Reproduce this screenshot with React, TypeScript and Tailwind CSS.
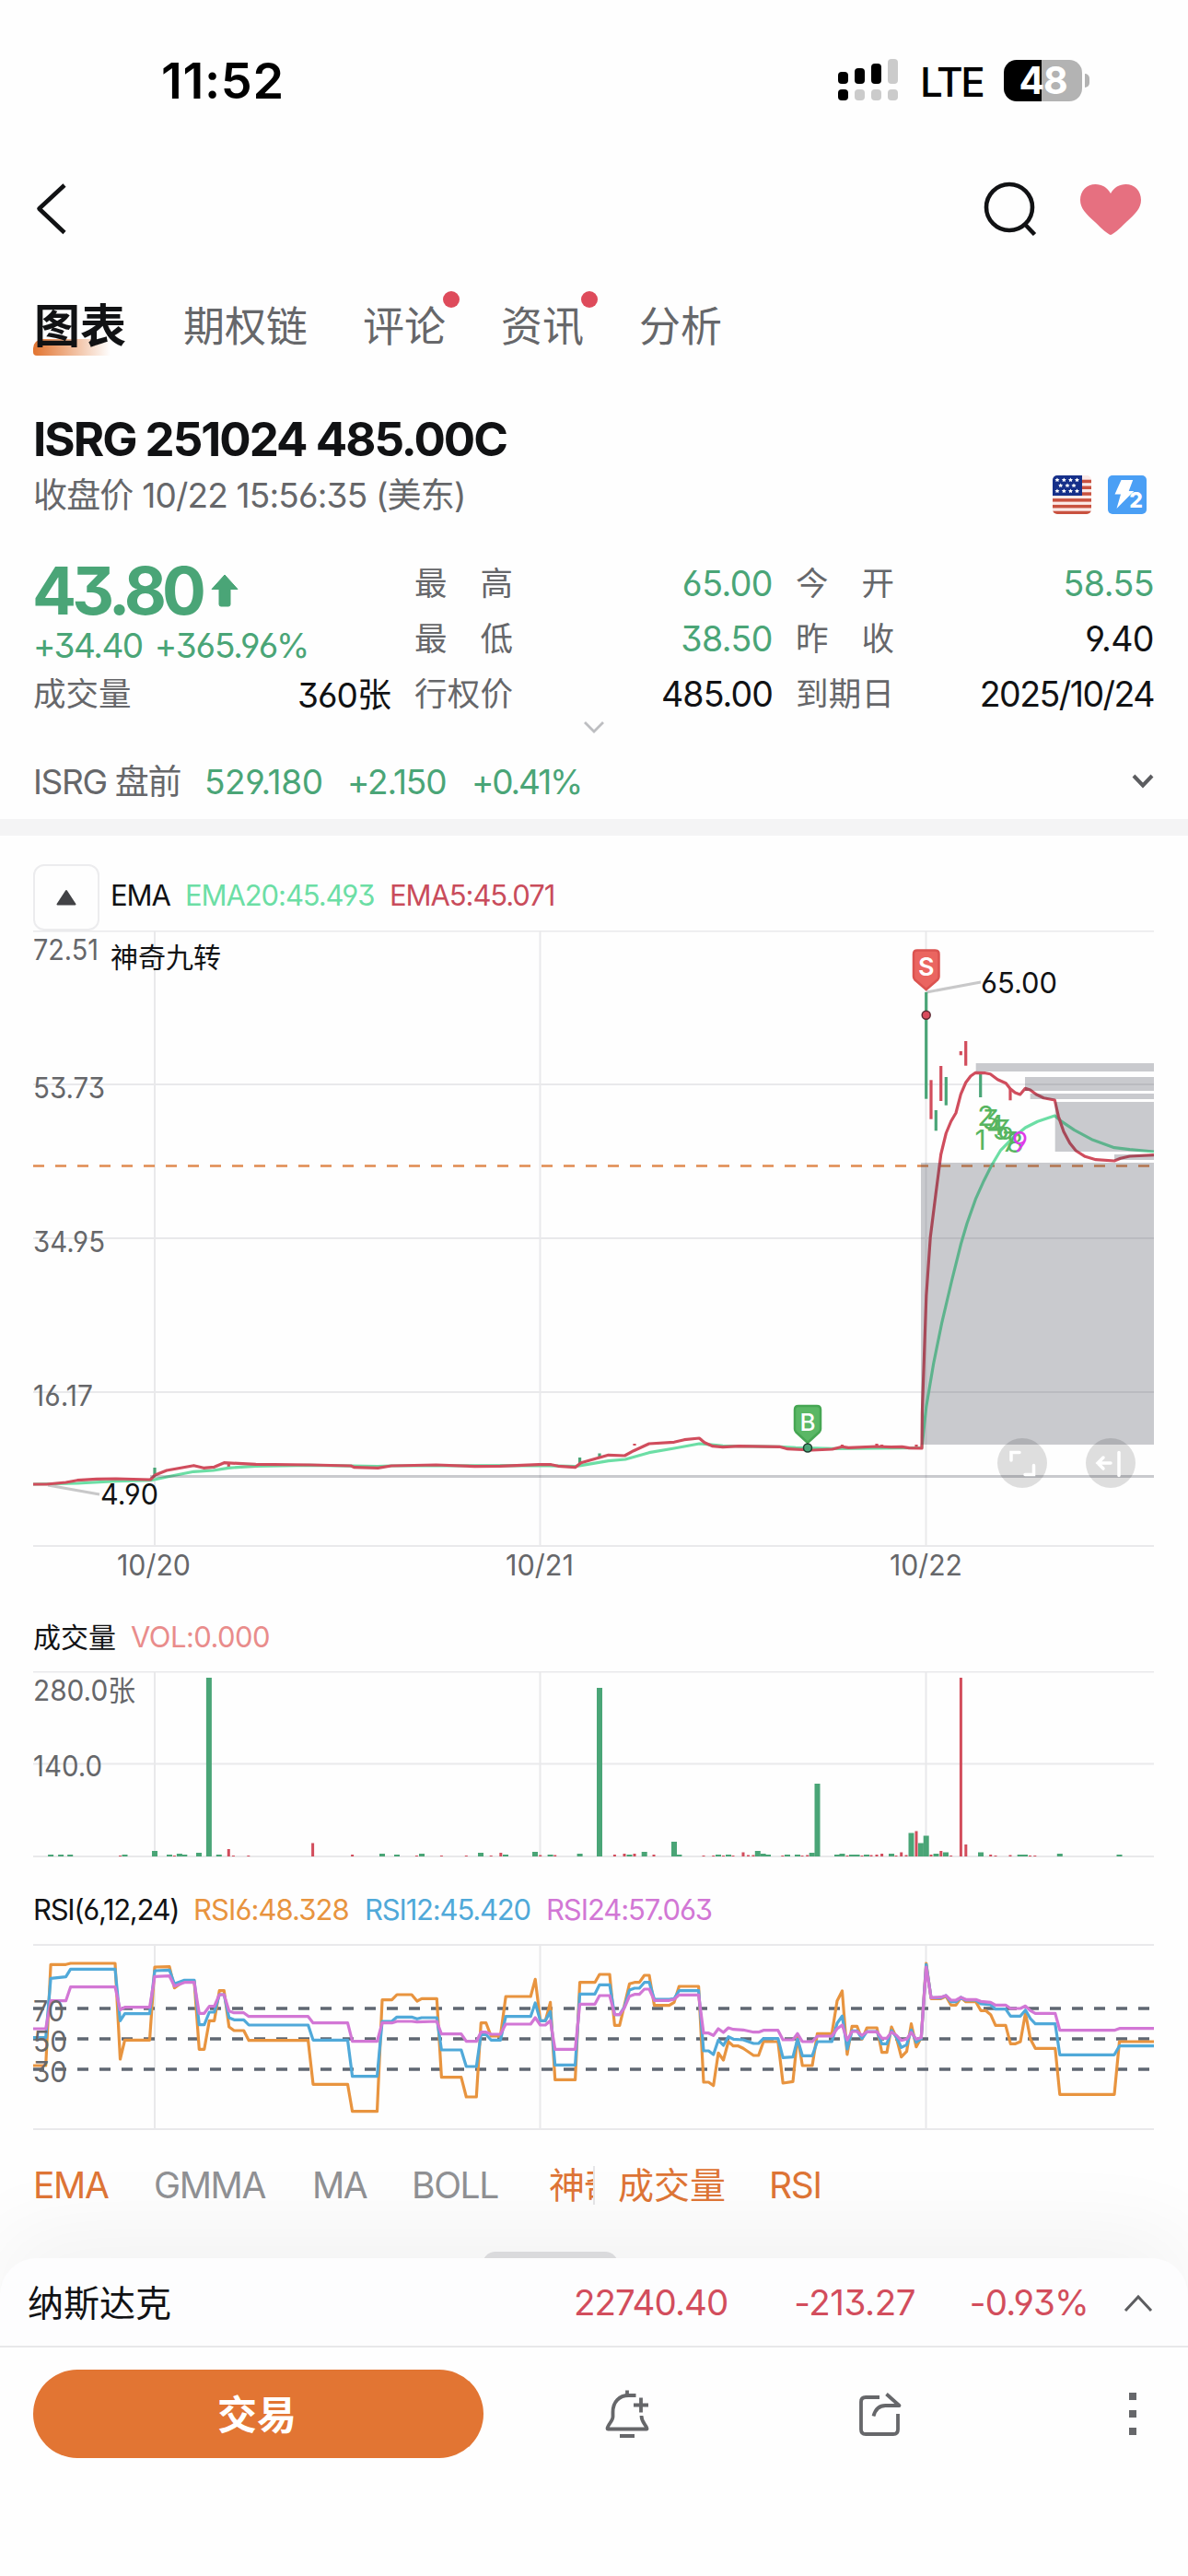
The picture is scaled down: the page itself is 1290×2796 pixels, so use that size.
import React from 'react';

const UP = '#4aa577';
const DOWN = '#d24d5c';
const GRID = '#e9e9eb';

const STATS = [
  [
    { label: '最高', value: '65.00', tone: 'text-[#4aa577] tracking-[-0.014em]' },
    { label: '最低', value: '38.50', tone: 'text-[#4aa577] tracking-[-0.014em]' },
    { label: '行权价', value: '485.00', tone: 'text-[#111214] tracking-[-0.024em]' },
  ],
  [
    { label: '今开', value: '58.55', tone: 'text-[#4aa577] tracking-[-0.014em]' },
    { label: '昨收', value: '9.40', tone: 'text-[#111214] tracking-[-0.014em]' },
    { label: '到期日', value: '2025/10/24', tone: 'text-[#111214] tracking-[-0.041em]' },
  ],
];

const EMA5 =
  '36,1611 50.5,1611 71.5,1609 84,1606.7 105,1605.3 126,1605 163.3,1606 168.4,1601 181,1596 210.4,1590.7 221,1593.3 232.7,1592.3 243.3,1587.7 277.8,1589.3 336.7,1590 380.9,1591 385,1592.7 410.4,1593.3 425,1591 473.5,1590 515.6,1591.7 543,1591.3 585,1589.7 598.5,1589.7 606,1591.3 624.6,1592.7 630.8,1587.7 648.4,1582.7 660.7,1579.3 678.3,1580 688,1574.7 704.8,1567 732,1565.3 743,1562.7 759.3,1561 765,1565.7 773.9,1569.7 784.9,1570.7 802.5,1569.7 846.5,1570.3 855.3,1572.7 881.7,1574 903.7,1573 914.7,1570.3 921.3,1571.3 952,1570 967.5,1570.7 979.4,1570.3 987.3,1571.7 1001,1572 1001.4,1533 1005.8,1406.7 1010.2,1343.3 1016,1297 1021.7,1253 1027.3,1230 1032.7,1217 1038,1208 1043.3,1187.7 1048.7,1175 1054,1168 1059.3,1164.3 1070,1164.7 1075.3,1165.7 1083.3,1171.7 1092.3,1175.7 1097,1181.7 1102.3,1186 1107.7,1188 1113.3,1181.3 1118.7,1183 1125,1187.7 1133.3,1191.7 1145.3,1194 1149.3,1211.7 1155,1228.3 1161.7,1240.7 1168.3,1249 1178.3,1255.3 1190,1258.7 1210,1260 1216.7,1257.3 1226.7,1255 1253,1253.7';

const EMA20 =
  '36,1611 84,1610 126,1607.7 164,1606.7 185,1602.3 210.4,1597.3 231.5,1596 248,1593.3 277.8,1591.3 336.7,1590.3 410,1591.7 425,1591 585,1590.7 624.6,1591.7 630.8,1590.7 660.7,1585.7 679,1584 704.8,1576.7 732,1572 759.3,1567 765,1567.3 784.9,1569.3 846.5,1570.3 864,1571.3 903.7,1572.3 1001,1571.3 1005.8,1526.7 1013.7,1480 1022.5,1436.7 1033.5,1390 1043.5,1350 1050,1328 1059.3,1301.7 1068.3,1281.7 1076.7,1265 1086.7,1248.3 1100,1235 1113.3,1224 1126.7,1217.3 1145.3,1211 1153.3,1217.7 1166.7,1226.7 1186.7,1237.3 1210,1245.7 1226.7,1247.7 1253,1250';

// x, top, bottom, colour
const CANDLES: [number, number, number, string][] = [
  [168, 1593, 1602, UP],
  [248.3, 1588, 1592, DOWN],
  [629.6, 1582, 1590, UP],
  [651, 1577.5, 1583, UP],
  [689, 1567, 1569, DOWN],
  [914.5, 1568, 1571, DOWN],
  [952, 1567, 1571, DOWN],
  [957.6, 1568, 1571, DOWN],
  [995, 1568, 1571, DOWN],
  [1005.7, 1077, 1192.7, UP],
  [1011, 1172.3, 1214.7, DOWN],
  [1016.3, 1205, 1227.3, UP],
  [1021.7, 1157, 1195, DOWN],
  [1027.3, 1169, 1199.7, UP],
  [1043.3, 1141, 1145.3, DOWN],
  [1048.7, 1130, 1156.7, DOWN],
  [1064.7, 1165, 1191, UP],
  [1097, 1181.7, 1194.3, DOWN],
];

// x, y, height of the unfilled price gaps
const GAPS = [
  [1059.7, 1154, 9],
  [1113, 1169, 15],
  [1118.7, 1187, 6],
  [1145.7, 1196, 54],
  [1210, 1253, 6],
  [1000, 1262, 306],
  [163, 1601, 3],
];

const NINE = [
  [1064.7, 1248],
  [1070.5, 1222],
  [1075.8, 1226],
  [1081, 1232],
  [1086.5, 1236.5],
  [1092, 1237],
  [1097, 1250],
  [1102, 1251],
  [1107.5, 1249.5],
];

const VOL_UP = [
  [55.1, 2], [66.1, 2], [76.2, 2], [135.5, 2], [168, 6], [184, 2], [194.9, 3], [200.3, 2], [216, 4],
  [226.9, 194], [237.8, 2], [415, 3], [431, 2], [458, 3], [522, 4], [549, 2], [581, 5], [597.6, 2],
  [629.6, 3], [651, 183], [683.5, 2], [699.7, 5], [732, 16], [737.4, 2], [780, 2], [791, 2], [822.8, 6],
  [828.6, 3], [834, 2], [855, 2], [866, 2], [881.7, 4], [887.5, 79], [909, 2], [914.5, 3], [925, 2],
  [930.6, 2], [941, 2], [968, 3], [989.5, 25.5], [999.9, 14.5], [1005.7, 22.5], [1016.5, 3], [1027, 4.5],
  [1065, 4.5], [1107.7, 2], [1113, 2], [1150.8, 3], [1215.5, 2],
];

const VOL_DOWN = [
  [130.5, 1], [189.4, 1], [248.3, 8], [253.4, 1], [269.8, 1], [339.6, 14.5], [382.6, 2], [452.4, 1],
  [479.4, 1], [506.3, 1], [533.2, 1], [543.8, 4], [586.7, 1.5], [602.7, 1.5], [667.4, 2], [678, 3], [689, 3],
  [710, 2], [764, 1], [774.7, 1], [785.5, 1], [796, 1], [807, 4.5], [812.5, 1.5], [818, 1.5], [849.8, 1],
  [871, 1], [876.7, 1.5], [920, 1], [936, 1], [946, 1.5], [952, 2], [957.6, 3], [973, 1], [978.7, 4.5],
  [984, 1.5], [995, 27.5], [1011, 2], [1021.8, 6], [1032.6, 1], [1043.4, 194], [1048.8, 13], [1075.7, 2],
  [1081, 1], [1097, 1.5], [1118.5, 1], [1123.8, 1],
];

const RSI6 =
  '36,2242 49.7,2242 55.1,2132.3 71.5,2132.3 76.6,2131 125,2131 130.5,2235 135.5,2214.3 162.5,2214.3 168,2135 184,2134.7 189.4,2157.7 200.3,2150 210.9,2150 216.3,2224.3 221.8,2224.3 227.3,2193.3 232.7,2193.3 238.2,2160.7 243.3,2160.7 248.7,2200 254.2,2204 264.7,2204 270.2,2214.7 334.6,2214.7 340,2262.3 377.5,2262.3 382.6,2291.7 409.5,2291.7 415,2170.7 425.5,2170.7 431,2165 447,2165 452.9,2172 457.9,2169.3 474.3,2169.3 479.4,2254.7 500.8,2254.7 506.3,2276 517.3,2276 522.3,2195.7 527.8,2195.7 533.2,2210 543.4,2210 549.2,2167 576.2,2167 581.2,2148.3 586.7,2193.3 592.2,2193.3 597.6,2173.3 602.7,2257.3 624.6,2257.3 629.6,2151.7 646,2151.7 651,2143 662,2143 667.4,2198.3 672.8,2198.3 678,2176.7 683.5,2153.3 689,2151.7 694.3,2151.7 699.7,2144 705,2144 710.5,2176.7 726.7,2176.7 732,2173.3 737.4,2156 758.6,2156 764,2260 769.4,2260 774.7,2263.7 780,2228.3 785.5,2236 790.9,2216 796.3,2220.7 801.7,2220.7 807,2223.3 818.3,2231 823.7,2231 829,2216 844.8,2216 850.2,2261 861,2259.3 866,2210 871.3,2242 882,2242 887.5,2207.3 903.3,2207.3 909,2171.7 914.5,2161 919.9,2230 925.2,2199.3 930.6,2199.3 936,2213.3 941.4,2201 952.2,2201 957.6,2227.7 963,2227.7 968,2200 973.3,2211.7 978.7,2232.7 984.5,2226.7 989.5,2196.7 994.9,2221.7 1000.3,2211.7 1005.7,2131 1011,2169.3 1021.8,2169.3 1027.2,2166.7 1032.6,2176.3 1038,2176.3 1043.4,2168.3 1048.8,2172.7 1059.6,2172.7 1065,2182.3 1070.3,2182.3 1075.7,2186.7 1081,2198.3 1092,2198.3 1097.3,2218.3 1102.7,2218.3 1108,2216 1113.5,2185 1118.9,2213.3 1124.2,2223.3 1145.8,2223.3 1150.8,2273.3 1210,2273.3 1215.5,2216 1253,2216';

const RSI12 =
  '36,2211.7 49.7,2211.7 55.1,2147.3 71.5,2145.7 76.6,2137.3 125,2137.3 130.5,2193.3 135.5,2185.7 162.5,2185.7 168,2139 184,2138.3 189.4,2153.3 200.3,2149.3 210.9,2149.3 216.3,2197.7 221.8,2197.7 227.3,2184 232.7,2184 238.2,2165 243.3,2165 248.7,2190 254.2,2192.3 264.7,2192.3 270.2,2198 334.6,2198 340,2214.3 377.5,2214.3 382.6,2253.7 409.5,2253.7 415,2194 425.5,2194 431,2189.3 447,2189.3 452.9,2191.3 457.9,2190 474.3,2190 479.4,2225 500.8,2225 506.3,2243 517.3,2243 522.3,2208.3 527.8,2208.3 533.2,2214.3 543.4,2214.3 549.2,2188.7 576.2,2188.7 581.2,2174 586.7,2193.3 592.2,2193.3 597.6,2183.3 602.7,2241.3 624.6,2241.3 629.6,2164.3 646,2164.3 651,2154.3 662,2154.3 667.4,2186.7 672.8,2186.7 678,2178.3 683.5,2160 689,2158 694.3,2158 699.7,2151.7 705,2151.7 710.5,2170 726.7,2170 732,2169.3 737.4,2160.7 758.6,2160.7 764,2226 769.4,2226 774.7,2230 780,2214.3 785.5,2220 790.9,2210.7 796.3,2213.3 807,2214 818.3,2218 823.7,2218 829,2212.7 844.8,2212.7 850.2,2233.3 861,2232.7 866,2213.3 871.3,2231.3 882,2231.3 887.5,2216 903.3,2216 909,2196 914.5,2188.3 919.9,2224 925.2,2204.3 930.6,2204.3 936,2212.7 941.4,2205 952.2,2205 957.6,2218.3 963,2218.3 968,2204 973.3,2211 978.7,2222.3 984.5,2219.3 989.5,2203.3 994.9,2216.7 1000.3,2212.7 1005.7,2132.3 1011,2168.3 1021.8,2168.3 1027.2,2166 1032.6,2172.7 1038,2172.7 1043.4,2168 1048.8,2171 1059.6,2171 1065,2175 1075.7,2176 1081,2180.7 1092,2180.7 1097.3,2188.3 1108,2188.3 1113.5,2181.7 1118.9,2191 1124.2,2196.7 1145.8,2196.7 1150.8,2230.3 1210,2230.3 1215.5,2220.7 1253,2220.7';

const RSI24 =
  '36,2202 49.7,2202 55.1,2171.7 71.5,2171.7 76.6,2156.7 125,2156.7 130.5,2181.7 135.5,2178.7 162.5,2178.7 168,2145.3 184,2144.7 189.4,2155.7 200.3,2151.7 210.9,2151.7 216.3,2185.3 221.8,2185.3 227.3,2177.7 232.7,2177.7 238.2,2165 243.3,2165 248.7,2182.7 254.2,2184.7 264.7,2184.7 270.2,2188.7 334.6,2188.7 340,2195.7 377.5,2195.7 382.6,2215.7 409.5,2215.7 415,2195.7 425.5,2195.7 431,2194 447,2194 452.9,2194.7 474.3,2194 479.4,2207.7 500.8,2207.7 506.3,2215.7 517.3,2215.7 522.3,2205.7 527.8,2205.7 533.2,2208 543.4,2208 549.2,2197 576.2,2197 581.2,2190 586.7,2198 592.2,2198 597.6,2193.3 602.7,2224.3 624.6,2224.3 629.6,2175.3 646,2175.3 651,2166 662,2166 667.4,2186.7 672.8,2186.7 678,2179.3 683.5,2166.7 689,2164.7 694.3,2164.7 699.7,2159 705,2159 710.5,2171.3 726.7,2171.3 732,2170 737.4,2165.3 758.6,2165.3 764,2206.7 769.4,2206.7 774.7,2209.3 780,2202 785.5,2206 790.9,2201 796.3,2202.7 807,2203.3 818.3,2205.7 823.7,2205.7 829,2203.7 844.8,2203.7 850.2,2214 861,2214 866,2207.3 871.3,2216 882,2216 887.5,2210 903.3,2210 909,2202 914.5,2198 919.9,2214.3 925.2,2205 930.6,2205 936,2209.3 941.4,2205.3 952.2,2205.3 957.6,2212.3 963,2212.3 968,2205.7 973.3,2209 978.7,2214.7 984.5,2213.3 989.5,2206 994.9,2213.3 1000.3,2211.7 1005.7,2135 1011,2168.3 1021.8,2167.7 1027.2,2166 1032.6,2171 1038,2171 1043.4,2168 1048.8,2170.3 1059.6,2170.3 1065,2172.3 1075.7,2173.3 1081,2176.3 1092,2176.3 1097.3,2180 1108,2180 1113.5,2177.3 1118.9,2182.3 1124.2,2185.3 1145.8,2185.3 1150.8,2203.7 1210,2203.7 1215.5,2201.7 1253,2201.7';

const Label = ({ x, y, w, children, fill = '#66676a', size = 31 }: any) => (
  <text x={x} y={y} textLength={w} lengthAdjust="spacingAndGlyphs" fontSize={size} fill={fill}>
    {children}
  </text>
);

const Grid = ({ rows, top, bottom }: { rows: number[]; top: number; bottom: number }) => (
  <g stroke={GRID} strokeWidth="2">
    {rows.map((y) => (
      <line key={y} x1="36" x2="1253" y1={y} y2={y} />
    ))}
    {[168, 586.5, 1005.5].map((x) => (
      <line key={x} x1={x} x2={x} y1={top} y2={bottom} />
    ))}
  </g>
);

const StatusBar = () => (
  <div className="flex h-[174px] shrink-0 items-center justify-between pr-[107px] pl-[175px]">
    <div className="pt-[2px] text-[54px] leading-none font-semibold tracking-[0.012em] text-black">11:52</div>
    <div className="flex items-center">
      <svg width="66" height="46" viewBox="910 64 66 46">
        <g fill="#000">
          <rect x="910" y="78" width="11" height="13" rx="4" />
          <rect x="928" y="74" width="11" height="17" rx="4" />
          <rect x="946" y="69" width="11" height="22" rx="4" />
          <rect x="910" y="97" width="11" height="12" rx="4" />
        </g>
        <g fill="#cbcbcb">
          <rect x="964" y="64" width="11" height="27" rx="4" />
          <rect x="928" y="97" width="11" height="12" rx="4" />
          <rect x="946" y="97" width="11" height="12" rx="4" />
          <rect x="964" y="97" width="11" height="12" rx="4" />
        </g>
      </svg>
      <div className="ml-[23px] w-[66px] pt-1 text-[44px] leading-none font-medium tracking-[-0.06em] text-black">LTE</div>
      <div className="ml-[25px] flex h-[45px] w-[85px] items-center justify-center rounded-[14px] bg-[linear-gradient(90deg,#000_48%,#b3b3b3_48%)] text-[41px] leading-none font-bold tracking-[-0.03em] text-white">
        48
      </div>
      <div className="ml-[3px] h-[15px] w-[5px] rounded-r-full bg-[#b3b3b3]" />
    </div>
  </div>
);

const Header = () => (
  <div className="flex h-[106px] shrink-0 items-center justify-between pr-[50px] pl-[36px]">
    <svg width="40" height="60" viewBox="37 197 40 60" fill="none" stroke="#111214" strokeWidth="4.6">
      <path d="M71 201 43.5 226.5 71 252.5" strokeLinejoin="round" />
    </svg>
    <div className="flex items-center gap-[46px]">
      <svg width="60" height="60" viewBox="1066 197 60 60" fill="none" stroke="#111214" strokeWidth="4.6">
        <circle cx="1096" cy="225" r="25" />
        <path d="M1113 243.5 1123.5 254.5" />
      </svg>
      <svg width="68" height="58" viewBox="1172 198 68 58" fill="#e67080">
        <path d="M1206 255c-3-1-9-6-17-14-10-9-16-15-16-24 0-10 7-17 16.5-17 7 0 13 3.5 16.5 10 3.5-6.5 9.5-10 16.5-10 9.5 0 16.5 7 16.5 17 0 9-6 15-16 24-8 8-14 13-17 14z" />
      </svg>
    </div>
  </div>
);

const TABS = [
  { name: '期权链', dot: false },
  { name: '评论', dot: true },
  { name: '资讯', dot: true },
  { name: '分析', dot: false },
];

const Tabs = () => (
  <div className="flex h-[146px] shrink-0 items-center gap-[60px] pt-[2px] pl-[37px] leading-none">
    <div className="relative mr-[2px] text-[50px] font-bold text-[#111214]">
      <div className="absolute top-[39px] -left-px h-[18px] w-[84px] rounded-tl-[10px] rounded-bl-[4px] bg-linear-to-r from-[#e27430] to-transparent" />
      <span className="relative">图表</span>
    </div>
    {TABS.map((tab) => (
      <div key={tab.name} className="relative text-[45px] text-[#66676a]">
        {tab.name}
        {tab.dot && <div className="absolute -top-[16px] -right-[15px] size-[18px] rounded-full bg-[#de4b5b]" />}
      </div>
    ))}
  </div>
);

const Flag = () => (
  <svg width="42" height="42" viewBox="0 0 42 42">
    <clipPath id="flag">
      <rect width="42" height="42" rx="5" />
    </clipPath>
    <g clipPath="url(#flag)">
      <rect width="42" height="42" fill="#fbeae8" />
      {[0, 1, 2, 3, 4, 5].map((i) => (
        <rect key={i} y={4.7 + i * 6.8} width="42" height="3.5" fill="#c8513f" />
      ))}
      <rect width="32" height="22" fill="#16308a" />
      {[5, 12.3, 19.5, 26.5].map((x) => (
        <g key={x} fill="#fff">
          <path d={`M${x} 2.4l.8 1.6 1.7.2-1.2 1.2.3 1.7-1.6-.8-1.6.8.3-1.7-1.2-1.2 1.7-.2z`} />
          <path d={`M${x} 14.4l.8 1.6 1.7.2-1.2 1.2.3 1.7-1.6-.8-1.6.8.3-1.7-1.2-1.2 1.7-.2z`} />
        </g>
      ))}
      {[8.7, 16, 23].map((x) => (
        <path key={x} fill="#fff" d={`M${x} 8.4l.8 1.6 1.7.2-1.2 1.2.3 1.7-1.6-.8-1.6.8.3-1.7-1.2-1.2 1.7-.2z`} />
      ))}
    </g>
  </svg>
);

const LevelTwo = () => (
  <div className="relative size-[42px] rounded-[5px] bg-[#4a9ff5]">
    <svg width="42" height="42" viewBox="0 0 42 42" fill="#fff">
      <path d="M14.5 5h12.7l-4.5 12h5.6L9.5 36l4.5-15.5H7.5z" />
    </svg>
    <span className="absolute right-[4px] bottom-[3px] text-[23px] leading-none font-extrabold text-white">2</span>
  </div>
);

const Quote = () => (
  <div className="shrink-0 pr-[37px] pl-[36px] leading-none">
    <div className="flex h-[100px] items-center text-[51px] font-bold tracking-[-0.039em] whitespace-nowrap text-[#111214]">
      ISRG 251024 485.00C
    </div>
    <div className="flex h-[22px] items-center justify-between pr-[8px]">
      <div className="text-[37px] tracking-[-0.022em] whitespace-nowrap text-[#66676a]">收盘价 10/22 15:56:35 (美东)</div>
      <div className="flex gap-[18px]">
        <Flag />
        <LevelTwo />
      </div>
    </div>

    <div className="mt-[56px] flex h-[180px]">
      <div className="w-[388px] text-[37px] tracking-[-0.04em]">
        <div className="flex h-[74px] items-center text-[#4aa577]">
          <span className="-ml-px w-[192px] text-[71px] font-bold tracking-[-0.068em]">43.80</span>
          <svg className="ml-[2px]" width="30" height="36" viewBox="0 0 30 36" fill="#4aa577">
            <path d="M15 1 29 16.5h-8V33q0 2-2 2h-8q-2 0-2-2V16.5H1z" strokeLinejoin="round" stroke="#4aa577" />
          </svg>
        </div>
        <div className="-mt-[2px] flex h-[48px] items-center gap-[13px] text-[#4aa577]">
          <span>+34.40</span>
          <span className="tracking-[-0.03em]">+365.96%</span>
        </div>
        <div className="flex h-[60px] items-center justify-between">
          <span className="text-[35.5px] tracking-normal text-[#66676a]">成交量</span>
          <span className="tracking-[-0.025em] text-[#111214]">360张</span>
        </div>
      </div>
      {STATS.map((col, i) => (
        <div key={i} className="ml-[26px] w-[389px] last:ml-[25px] last:w-auto last:flex-1">
          {col.map((row) => (
            <div key={row.label} className="flex h-[60px] items-center justify-between">
              <span className="flex w-[107px] justify-between text-[35.5px] text-[#66676a]">
                {[...row.label].map((ch) => (
                  <span key={ch}>{ch}</span>
                ))}
              </span>
              <span className={`text-[37.5px] ${row.tone}`}>{row.value}</span>
            </div>
          ))}
        </div>
      ))}
    </div>

    <div className="flex h-[23px] justify-center">
      <svg className="-mt-[2px]" width="24" height="15" viewBox="0 0 24 15" fill="none" stroke="#bdbec1" strokeWidth="2.8">
        <path d="M2 2l10 10L22 2" />
      </svg>
    </div>

    <div className="flex h-[82px] items-center text-[37px] text-[#4aa577]">
      <span className="w-[186px] tracking-[-0.036em] text-[#66676a]">ISRG 盘前</span>
      <span className="w-[155px] tracking-[-0.012em]">529.180</span>
      <span className="w-[135px] tracking-[-0.03em]">+2.150</span>
      <span className="flex-1 tracking-[-0.058em]">+0.41%</span>
      <svg width="24" height="18" viewBox="0 0 24 18" fill="none" stroke="#5c5d60" strokeWidth="4">
        <path d="M2 3l10 10.5L22 3" />
      </svg>
    </div>
  </div>
);

const PriceChart = () => (
  <svg className="block shrink-0" width="1290" height="720" viewBox="0 1010 1290 720">
    <Grid rows={[1010.5, 1177, 1344, 1511, 1678]} top={1010} bottom={1678} />
    <line x1="36" x2="1253" y1="1265.5" y2="1265.5" stroke="#e08a50" strokeWidth="2.5" strokeDasharray="12 12" />

    <line x1="1006" y1="1077" x2="1065" y2="1066" stroke="#c8c8c9" strokeWidth="3" />
    <line x1="52" y1="1612" x2="108" y2="1622" stroke="#c8c8c9" strokeWidth="3" />

    {CANDLES.map(([x, top, bottom, color]) => (
      <rect key={x} x={x - 1.6} y={top} width="3.2" height={bottom - top} fill={color} />
    ))}
    <polyline points={EMA20} fill="none" stroke="#6cdea5" strokeWidth="3.2" strokeLinejoin="round" />
    <polyline points={EMA5} fill="none" stroke="#d04d5d" strokeWidth="3.2" strokeLinejoin="round" />
    {GAPS.map(([x, y, h]) => (
      <rect key={y} x={x} y={y} width={1253 - x} height={h} fill="#3c404c" fillOpacity="0.27" />
    ))}

    <g fontSize="30" textAnchor="middle" fill="#57b560">
      {NINE.map(([x, y], i) => (
        <text key={i} x={x} y={y} fill={i === 8 ? '#de3ae8' : undefined}>
          {i + 1}
        </text>
      ))}
    </g>

    <path
      d="M996 1031.5h19.5q4 0 4 4v24.5q0 2-1.5 3.5L1005.7 1074l-12.2-10.5q-1.5-1.5-1.5-3.5v-24.5q0-4 4-4z"
      fill="#ea6560"
      stroke="#db5350"
      strokeWidth="2.5"
    />
    <text x="1005.7" y="1058.5" fontSize="27" fontWeight="600" textAnchor="middle" fill="#fff">
      S
    </text>
    <circle cx="1005.7" cy="1101.7" r="4.5" fill="#d94b5c" stroke="#5c2a33" strokeWidth="1.5" />

    <path
      d="M867 1526h20q4 0 4 4v21q0 2-1.5 3.5L877 1566l-12.5-11.5q-1.5-1.5-1.5-3.5v-21q0-4 4-4z"
      fill="#5ab765"
      stroke="#46a653"
      strokeWidth="2.5"
    />
    <text x="877" y="1553" fontSize="26" fontWeight="500" textAnchor="middle" fill="#fff">
      B
    </text>
    <circle cx="877" cy="1571.5" r="4.5" fill="#4aa577" stroke="#1f3d2e" strokeWidth="1.5" />

    <Label x="36" y="1042" w="71">72.51</Label>
    <Label x="36" y="1192" w="78">53.73</Label>
    <Label x="36" y="1359" w="78">34.95</Label>
    <Label x="36" y="1526" w="65">16.17</Label>
    <Label x="120" y="1050" w="120" size={30} fill="#111214">神奇九转</Label>
    <Label x="1065" y="1078" w="83" fill="#111214">65.00</Label>
    <Label x="109" y="1633" w="63" fill="#111214">4.90</Label>
    <Label x="127" y="1710" w="80">10/20</Label>
    <Label x="549" y="1710" w="74">10/21</Label>
    <Label x="966" y="1710" w="79">10/22</Label>

    <g fill="#000" fillOpacity="0.125">
      <circle cx="1110" cy="1588" r="27" />
      <circle cx="1206" cy="1588" r="27" />
    </g>
    <g fill="none" stroke="#fff" strokeWidth="3.5" strokeLinecap="round">
      <path d="M1098 1585v-8.5h9" />
      <path d="M1122.5 1590.5v10h-9.5" />
      <path d="M1206 1588h-14M1198 1582l-6 6 6 6" />
      <path d="M1215 1576.5v25" />
    </g>
  </svg>
);

const VolumeChart = () => (
  <svg className="block shrink-0" width="1290" height="202" viewBox="0 1814 1290 202">
    <Grid rows={[1814.5, 1914.5, 2015]} top={1814} bottom={2015} />
    {VOL_UP.map(([x, h]) => (
      <rect key={x} x={x - 3} y={2015 - h} width="6" height={h} fill={UP} />
    ))}
    {VOL_DOWN.map(([x, h]) => (
      <rect key={x} x={x - 1.5} y={2015 - h} width="3" height={h} fill={DOWN} />
    ))}
    <Label x="36" y="1846" w="111">280.0张</Label>
    <Label x="36" y="1928" w="75">140.0</Label>
  </svg>
);

const RsiChart = () => (
  <svg className="block shrink-0" width="1290" height="202" viewBox="0 2110 1290 202">
    <Grid rows={[2111, 2311]} top={2110} bottom={2311} />
    {[2180, 2213, 2246].map((y) => (
      <line key={y} x1="36" x2="1253" y1={y} y2={y} stroke="#5f6772" strokeWidth="3.3" strokeDasharray="12 12" />
    ))}
    <g fill="none" strokeWidth="3.2" strokeLinejoin="round">
      <polyline points={RSI6} stroke="#e8943f" />
      <polyline points={RSI12} stroke="#50a9d9" />
      <polyline points={RSI24} stroke="#d277d5" />
    </g>
    <Label x="36" y="2194" w="34">70</Label>
    <Label x="36" y="2227" w="37">50</Label>
    <Label x="36" y="2260" w="37">30</Label>
  </svg>
);

const LEGEND = 'flex shrink-0 items-center pl-[36px] text-[31px] leading-none tracking-[-0.035em] whitespace-nowrap';

const Indicators = () => (
  <div className="flex h-[139px] shrink-0 items-center pb-[20px] pl-[36px] text-[39px] leading-none tracking-[-0.035em] text-[#909194]">
    <span className="w-[131px] text-[#de7536]">EMA</span>
    <span className="w-[172px]">GMMA</span>
    <span className="w-[108px]">MA</span>
    <span className="w-[149px]">BOLL</span>
    <span className="flex h-[42px] w-[50px] items-center overflow-hidden border-r-2 border-[#e6e6e8] whitespace-nowrap text-[#de7536]">神奇九转</span>
    <span className="ml-[25px] w-[164px] tracking-normal text-[#de7536]">成交量</span>
    <span className="text-[#de7536]">RSI</span>
  </div>
);

const IndexBar = () => (
  <div className="relative shrink-0">
    <div className="absolute -top-[7px] left-[524px] h-[20px] w-[147px] rounded-t-[14px] bg-[#e2e2e4]" />
    <div className="relative flex h-[97px] items-center rounded-t-[40px] border-b-2 border-[#e8e8ea] bg-[#fdfdfe] pt-[2px] pl-[30px] text-[38.5px] leading-none text-[#d24d5c] shadow-[0_-20px_100px_rgba(0,0,0,0.06)]">
      <span className="flex-1 text-[39px] text-[#111214]">纳斯达克</span>
      <span className="w-[167px] text-right tracking-[-0.025em]">22740.40</span>
      <span className="w-[204px] text-right tracking-[-0.012em]">-213.27</span>
      <span className="w-[188px] text-right tracking-[-0.022em]">-0.93%</span>
      <svg className="mr-[38px] ml-[38px]" width="32" height="22" viewBox="0 0 32 22" fill="none" stroke="#5c5d60" strokeWidth="3">
        <path d="M2 19 16 4l14 15" />
      </svg>
    </div>
  </div>
);

const Actions = () => (
  <div className="relative flex flex-1 items-start bg-[#fefefe] pt-[24px] pl-[36px]">
    <button className="h-[96px] w-[489px] rounded-full bg-[#e27533] pt-[3px] pr-[3px] text-[43px] leading-none font-bold text-white">交易</button>
    <svg className="mt-[17px] ml-[128px]" width="60" height="60" viewBox="653 2589 60 60" fill="none" stroke="#66676a" strokeWidth="3.8">
      <path d="M690.5 2600h-8c-10 0-17 7-17 18v5c0 5-6 9-6 13q0 .5.5.5h42q.7 0 .5-.7c-1-4-6-6.5-6-13.8" strokeLinejoin="round" />
      <path d="M681 2594.5v6M673 2644h16M688 2610.5h16M696 2602.5v16" />
    </svg>
    <svg className="mt-[17px] ml-[214px]" width="60" height="60" viewBox="927 2589 60 60" fill="none" stroke="#66676a" strokeWidth="3.8">
      <path d="M955 2602h-15q-5 0-5 5v30q0 5 5 5h30q5 0 5-5v-17" />
      <path d="M948.5 2622.5q3-11.5 13-11.5h15L962.5 2598.5" strokeLinejoin="round" />
    </svg>
    <div className="mt-[25px] ml-[239px] flex flex-col gap-[11px]">
      <div className="size-[8px] bg-[#66676a]" />
      <div className="size-[8px] bg-[#66676a]" />
      <div className="size-[8px] bg-[#66676a]" />
    </div>
  </div>
);

export default function App() {
  return (
    <div className="flex h-[2796px] w-[1290px] flex-col overflow-hidden bg-[#fefefe] font-[Inter,'Noto_Sans_CJK_SC',sans-serif] [font-feature-settings:'cv03','cv04','cv09']">
      <StatusBar />
      <Header />
      <Tabs />
      <Quote />
      <div className="h-[18px] shrink-0 bg-[#f4f4f5]" />

      <div className={`${LEGEND} h-[103px] items-end!`}>
        <div className="flex size-[72px] items-center justify-center rounded-[12px] border-2 border-[#ececee]">
          <svg width="22" height="18" viewBox="0 0 22 18" fill="#424346" stroke="#424346" strokeWidth="2" strokeLinejoin="round">
            <path d="M11 2 20.5 16.5h-19z" />
          </svg>
        </div>
        <div className="flex h-[78px] items-center pl-[12px]">
          <span className="w-[81px] text-[#111214]">EMA</span>
          <span className="w-[222px] text-[#6cdea5]">EMA20:45.493</span>
          <span className="text-[#c94c5b]">EMA5:45.071</span>
        </div>
      </div>
      <PriceChart />

      <div className={`${LEGEND} h-[84px] pt-[9px]`}>
        <span className="w-[106px] text-[30px] tracking-normal text-[#111214]">成交量</span>
        <span className="tracking-[-0.018em] text-[#e98c8b]">VOL:0.000</span>
      </div>
      <VolumeChart />

      <div className={`${LEGEND} h-[94px] pt-[19px]`}>
        <span className="w-[174px] tracking-[-0.042em] text-[#111214]">RSI(6,12,24)</span>
        <span className="w-[186px] tracking-[-0.03em] text-[#e8943f]">RSI6:48.328</span>
        <span className="w-[197px] tracking-[-0.038em] text-[#50a9d9]">RSI12:45.420</span>
        <span className="text-[#d277d5]">RSI24:57.063</span>
      </div>
      <RsiChart />

      <Indicators />
      <IndexBar />
      <Actions />
    </div>
  );
}
